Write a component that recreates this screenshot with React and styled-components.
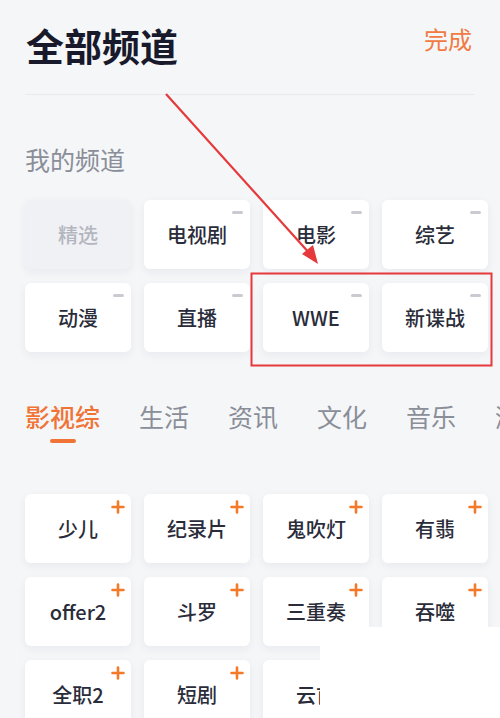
import React from 'react'
import styled, { createGlobalStyle } from 'styled-components'

const GlobalStyle = createGlobalStyle`
  html, body {
    margin: 0;
    padding: 0;
    background: #f5f6f8;
  }
  body {
    font-family: "Noto Sans CJK SC", "Noto Sans", sans-serif;
  }
`

const Page = styled.div`
  position: relative;
  width: 500px;
  height: 718px;
  overflow: hidden;
  background: #f5f6f8;
`

const Header = styled.div`
  display: flex;
  justify-content: space-between;
  align-items: flex-start;
  height: 71px;
  padding: 23px 28px 0 26px;
`

const Title = styled.h1`
  margin: 0;
  font-size: 38px;
  line-height: 44px;
  font-weight: 700;
  color: #181a2c;
`

const Done = styled.span`
  margin-top: 2px;
  font-size: 24px;
  line-height: 28px;
  color: #f07a42;
`

const Divider = styled.div`
  height: 1px;
  margin: 0 25px;
  background: #e9eaee;
`

const Label = styled.div`
  margin: 49px 0 0 25px;
  font-size: 25px;
  line-height: 30px;
  color: #8a8e98;
`

const Grid = styled.div`
  display: grid;
  grid-template-columns: repeat(4, 106px);
  grid-auto-rows: 69px;
  column-gap: 13px;
  row-gap: 14px;
  padding-left: 25px;
  margin-top: ${p => p.$top}px;
`

const Card = styled.div`
  position: relative;
  display: flex;
  align-items: center;
  justify-content: center;
  border-radius: 6px;
  background: ${p => (p.$fixed ? '#f0f1f4' : '#ffffff')};
  box-shadow: 0 3px 10px rgba(30, 40, 70, 0.06);
  font-size: 20px;
  font-weight: 500;
  color: ${p => (p.$fixed ? '#b3b6be' : '#2a2c3a')};
`

const Minus = styled.span`
  position: absolute;
  top: 11px;
  right: 7px;
  width: 11px;
  height: 3px;
  border-radius: 2px;
  background: #c9cbd1;
`

const Plus = styled.svg`
  position: absolute;
  top: 6px;
  right: 6px;
  width: 14px;
  height: 14px;
`

const Tabs = styled.div`
  display: flex;
  gap: 39px;
  margin: 49px 0 0 25px;
  white-space: nowrap;
`

const Tab = styled.div`
  position: relative;
  font-size: 25px;
  line-height: 30px;
  color: ${p => (p.$active ? '#f07436' : '#8a8e98')};
  font-weight: ${p => (p.$active ? 500 : 400)};

  &::after {
    content: '';
    display: ${p => (p.$active ? 'block' : 'none')};
    position: absolute;
    left: 25px;
    top: 38px;
    width: 26px;
    height: 4px;
    border-radius: 2px;
    background: #f07436;
  }
`

const Annotation = styled.svg`
  position: absolute;
  left: 0;
  top: 0;
  pointer-events: none;
`

const Cover = styled.div`
  position: absolute;
  left: 320px;
  top: 627px;
  right: 0;
  bottom: 0;
  background: #ffffff;
`

const mine = ['精选', '电视剧', '电影', '综艺', '动漫', '直播', 'WWE', '新谍战']
const more = ['少儿', '纪录片', '鬼吹灯', '有翡', 'offer2', '斗罗', '三重奏', '吞噬', '全职2', '短剧', '云首', '']
const tabs = ['影视综', '生活', '资讯', '文化', '音乐', '潮流']

const PlusIcon = () => (
  <Plus viewBox="0 0 14 14">
    <path d="M7 1.5v11M1.5 7h11" stroke="#f47a2a" strokeWidth="2.6" strokeLinecap="round" />
  </Plus>
)

export default function App() {
  return (
    <Page>
      <GlobalStyle />
      <Header>
        <Title>全部频道</Title>
        <Done>完成</Done>
      </Header>
      <Divider />
      <Label>我的频道</Label>
      <Grid $top={26}>
        {mine.map((name, i) => (
          <Card key={name} $fixed={i === 0}>
            {name}
            {i > 0 && <Minus />}
          </Card>
        ))}
      </Grid>
      <Tabs>
        {tabs.map((t, i) => (
          <Tab key={t} $active={i === 0}>{t}</Tab>
        ))}
      </Tabs>
      <Grid $top={63}>
        {more.map((name, i) => (
          <Card key={i}>
            {name}
            <PlusIcon />
          </Card>
        ))}
      </Grid>
      <Annotation width="500" height="718">
        <line x1="166" y1="94" x2="311" y2="255" stroke="#e5393c" strokeWidth="2.2" />
        <path d="M318 264 L302 254 L313 245 Z" fill="#e5393c" />
        <rect x="251.5" y="273.5" width="240" height="92" fill="none" stroke="#e5393c" strokeWidth="2" />
      </Annotation>
      <Cover />
    </Page>
  )
}
